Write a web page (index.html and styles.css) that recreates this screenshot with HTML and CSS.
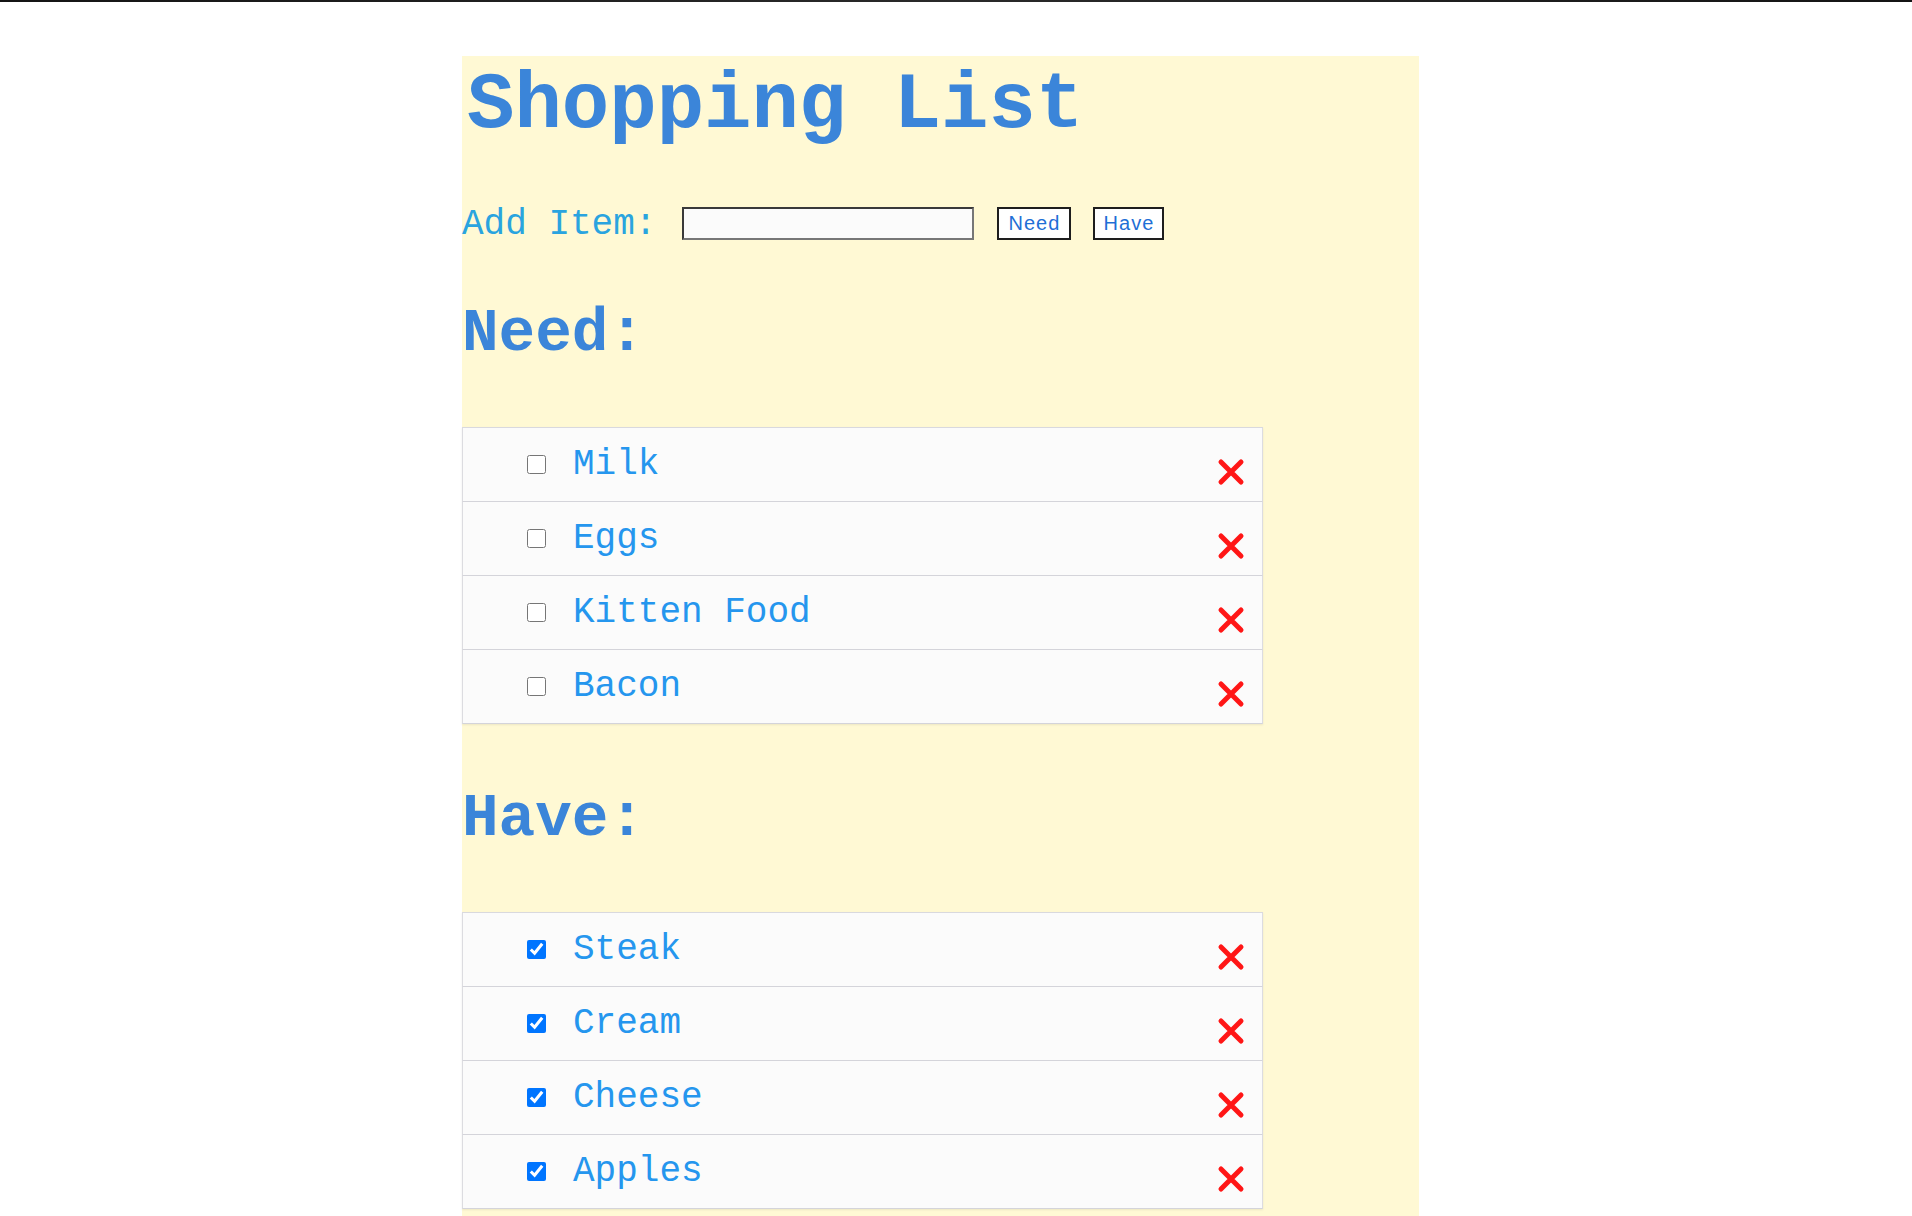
FILE: index.html
```html
<!DOCTYPE html>
<html lang="en">
<head>
<meta charset="utf-8">
<title>Shopping List</title>
<link rel="stylesheet" href="styles.css">
</head>
<body>
<div class="topline"></div>
<main class="app">
  <h1 class="title">Shopping List</h1>
  <div class="add-row">
    <label class="add-label" for="item">Add Item:</label>
    <input class="add-input" id="item" type="text">
    <button class="btn btn-need">Need</button>
    <button class="btn btn-have">Have</button>
  </div>

  <h2 class="section-title">Need:</h2>
  <ul class="list">
    <li class="row"><input class="check" type="checkbox"><span class="item">Milk</span><span class="del"><svg viewBox="0 0 28 28" width="28" height="28"><path d="M4 4 L24 24 M24 4 L4 24" /></svg></span></li>
    <li class="row"><input class="check" type="checkbox"><span class="item">Eggs</span><span class="del"><svg viewBox="0 0 28 28" width="28" height="28"><path d="M4 4 L24 24 M24 4 L4 24" /></svg></span></li>
    <li class="row"><input class="check" type="checkbox"><span class="item">Kitten Food</span><span class="del"><svg viewBox="0 0 28 28" width="28" height="28"><path d="M4 4 L24 24 M24 4 L4 24" /></svg></span></li>
    <li class="row"><input class="check" type="checkbox"><span class="item">Bacon</span><span class="del"><svg viewBox="0 0 28 28" width="28" height="28"><path d="M4 4 L24 24 M24 4 L4 24" /></svg></span></li>
  </ul>

  <h2 class="section-title section-have">Have:</h2>
  <ul class="list">
    <li class="row"><input class="check" type="checkbox" checked><span class="item">Steak</span><span class="del"><svg viewBox="0 0 28 28" width="28" height="28"><path d="M4 4 L24 24 M24 4 L4 24" /></svg></span></li>
    <li class="row"><input class="check" type="checkbox" checked><span class="item">Cream</span><span class="del"><svg viewBox="0 0 28 28" width="28" height="28"><path d="M4 4 L24 24 M24 4 L4 24" /></svg></span></li>
    <li class="row"><input class="check" type="checkbox" checked><span class="item">Cheese</span><span class="del"><svg viewBox="0 0 28 28" width="28" height="28"><path d="M4 4 L24 24 M24 4 L4 24" /></svg></span></li>
    <li class="row"><input class="check" type="checkbox" checked><span class="item">Apples</span><span class="del"><svg viewBox="0 0 28 28" width="28" height="28"><path d="M4 4 L24 24 M24 4 L4 24" /></svg></span></li>
  </ul>
</main>
</body>
</html>
```

FILE: styles.css
```css
html, body {
  margin: 0;
  padding: 0;
  background: #ffffff;
}

body {
  font-family: "Liberation Mono", "Courier New", monospace;
}

.topline {
  height: 2px;
  background: linear-gradient(to right, #141414, #2a2a2a 50%, #141414);
}

.app {
  width: 957px;
  margin: 54px 0 0 462px;
  background: #fff9d4;
  padding: 10px 0 40px 0;
}

.title {
  margin: 0;
  padding-left: 5px;
  font-family: "Liberation Mono", "Courier New", monospace;
  font-weight: bold;
  font-size: 79px;
  line-height: 80px;
  color: #3b85d9;
}

.add-row {
  display: flex;
  align-items: center;
  margin-top: 57px;
  height: 40px;
}

.add-label {
  font-size: 36px;
  line-height: 40px;
  color: #2aa4df;
  margin-right: 26px;
  position: relative;
  top: 2px;
}

.add-input {
  box-sizing: border-box;
  width: 292px;
  height: 33px;
  border: 2px solid #3a3a3a;
  border-right-color: #777;
  border-bottom-color: #777;
  background: #fbfbfb;
  margin: 0 23px 0 0;
  padding: 0 4px;
}

.btn {
  box-sizing: border-box;
  height: 33px;
  border: 2px solid #1e1e1e;
  background: #ffffff;
  color: #1f6fd6;
  font-family: "Liberation Sans Narrow", "Liberation Sans", sans-serif;
  font-size: 20px;
  letter-spacing: 1px;
  padding: 0;
  margin: 0;
}

.btn-need {
  width: 74px;
  margin-right: 22px;
}

.btn-have {
  width: 71px;
}

.section-title {
  margin: 60px 0 62px 0;
  font-family: "Liberation Mono", "Courier New", monospace;
  font-weight: bold;
  font-size: 61px;
  line-height: 62px;
  color: #3b85d9;
}

.section-have {
  margin-top: 64px;
}

.list {
  list-style: none;
  margin: 0;
  padding: 0;
  width: 801px;
  border-top: 1px solid #d9d9de;
  box-shadow: 0 1px 2px rgba(0, 0, 0, 0.08);
}

.row {
  box-sizing: border-box;
  height: 74px;
  display: flex;
  align-items: center;
  padding-left: 64px;
  padding-right: 17px;
  background: #fbfbfb;
  border-left: 1px solid #dcdce0;
  border-right: 1px solid #dcdce0;
  border-bottom: 1px solid #d4d4da;
}

.check {
  width: 19px;
  height: 19px;
  margin: 0 27px 0 0;
}

.item {
  flex: 1;
  font-size: 36px;
  line-height: 40px;
  color: #2596ee;
}

.del {
  display: flex;
  margin-top: 14px;
}

.del svg path {
  stroke: #ff1616;
  stroke-width: 5;
  stroke-linecap: round;
  fill: none;
}
```
